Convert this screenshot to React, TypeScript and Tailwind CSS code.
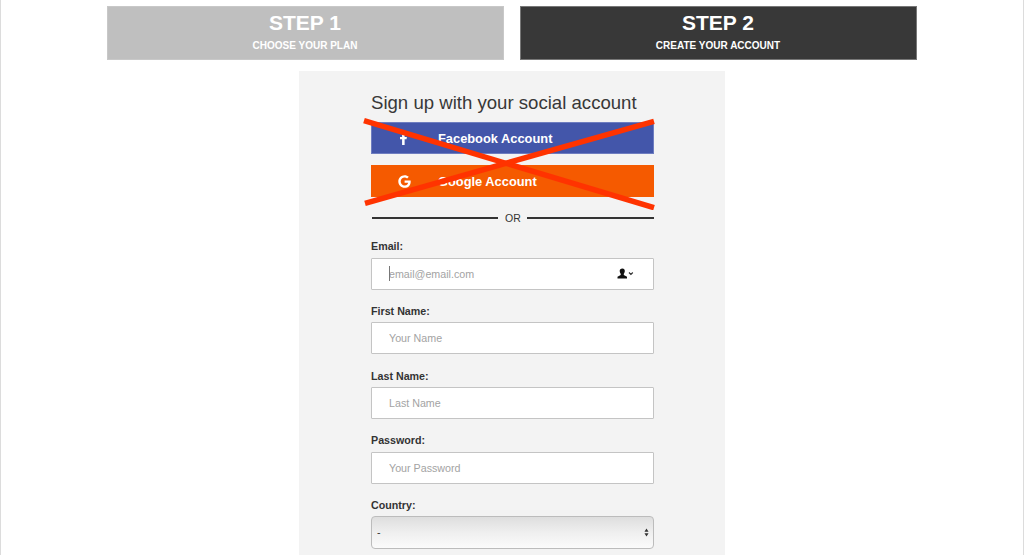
import { FaFacebookF, FaGoogle } from 'react-icons/fa';

const font = { fontFamily: '"Liberation Sans", Arial, sans-serif' };

// ── Small pieces ─────────────────────────────────────────
const StepBox = ({ title, sub, active }: { title: string; sub: string; active?: boolean }) => (
  <div className={`w-[397px] h-[54px] flex flex-col items-center border ${active ? 'bg-[#383838] border-[#777]' : 'bg-[#bfbfbf] border-[#c8c8c8]'}`}>
    <div className="mt-[4px] pr-[1px] text-[21px] leading-[24px] font-bold text-white">{title}</div>
    <div className="mt-[5px] pr-[1px] text-[10px] leading-[12px] font-bold text-white">{sub}</div>
  </div>
);

const Field = ({ label, placeholder, gap, inner, caret, icon }: { label: string; placeholder: string; gap: string; inner: string; caret?: boolean; icon?: boolean }) => (
  <div className={gap}>
    <div className="text-[10.7px] leading-[15px] font-bold text-[#333]">{label}</div>
    <div className={`relative ${inner}`}>
      <input
        readOnly
        placeholder={placeholder}
        className="w-[283px] h-[32px] block bg-white border border-[#c4c4c4] rounded-[1px] pl-[17px] text-[10.7px] text-[#333] placeholder:text-[#a3a3a3] outline-none"
        style={font}
      />
      {caret && <span className="absolute left-[18px] top-[8px] w-px h-[15px] bg-[#777]" />}
      {icon && (
        <svg className="absolute left-[246px] top-[10px]" width="17" height="11" viewBox="0 0 17 11">
          <path d="M5.500 0.500c1.500 0 2.300 1 2.300 2.500 0 1.200-.5 2.100-1 2.800v1.300l3.200 1.700v1.700H.5V8.800l3.200-1.700V5.800c-.5-.7-1-1.600-1-2.800 0-1.500.8-2.500 2.800-2.500z" fill="#111" />
          <path d="M12 4.500l1.900 1.900 1.900-1.900" fill="none" stroke="#333" strokeWidth="1.200" />
        </svg>
      )}
    </div>
  </div>
);

export default function App() {
  return (
    <div className="w-[1024px] h-[555px] overflow-hidden bg-white border-x border-[#dcdcdc]" style={font}>
      <div className="flex justify-center gap-[16px] pt-[6px]">
        <StepBox title="STEP 1" sub="CHOOSE YOUR PLAN" />
        <StepBox title="STEP 2" sub="CREATE YOUR ACCOUNT" active />
      </div>

      <div className="w-[426px] h-[484px] ml-[298px] mt-[11px] bg-[#f3f3f3] pl-[72px] pt-[21px]">
        <div className="w-[283px]">
          <h2 className="text-[18.6px] leading-[22px] text-[#383838] whitespace-nowrap">Sign up with your social account</h2>

          {/* Social buttons, struck through */}
          <div className="relative mt-[8px]">
            <div className="h-[32px] pt-[1px] flex items-center bg-[#4356aa] border border-[#6e7dc0] text-white">
              <FaFacebookF className="ml-[25px] w-[13px] h-[13px]" />
              <span className="ml-[28px] text-[12.85px] font-bold">Facebook Account</span>
            </div>
            <div className="h-[32px] pt-[1px] mt-[11px] flex items-center bg-[#f55a00] text-white">
              <FaGoogle className="ml-[27px] w-[13px] h-[13px]" />
              <span className="ml-[27px] text-[12.85px] font-bold">Google Account</span>
            </div>
            <svg className="absolute left-[-9px] top-[-4px]" width="296" height="92" viewBox="0 0 296 92">
              <path d="M2 2.700L292 89.700" stroke="#ff3300" strokeWidth="5.500" />
              <path d="M3 85.300L292 3.300" stroke="#ff3300" strokeWidth="5.500" />
            </svg>
          </div>

          <div className="mt-[15px] flex items-center text-[10.5px] leading-[12px] text-[#333]">
            <span className="ml-[1px] w-[126px] h-[2px] bg-[#333]" />
            <span className="ml-[7px] mr-[6px]">OR</span>
            <span className="w-[127px] h-[2px] bg-[#333]" />
          </div>

          <Field label="Email:" placeholder="email@email.com" gap="mt-[15px]" inner="mt-[4px]" caret icon />
          <Field label="First Name:" placeholder="Your Name" gap="mt-[14px]" inner="mt-[3px]" />
          <Field label="Last Name:" placeholder="Last Name" gap="mt-[15px]" inner="mt-[3px]" />
          <Field label="Password:" placeholder="Your Password" gap="mt-[14px]" inner="mt-[4px]" />

          <div className="mt-[14px]">
            <div className="text-[10.7px] leading-[15px] font-bold text-[#333]">Country:</div>
            <div className="relative mt-[3px]">
              <select
                className="appearance-none block w-[283px] h-[33px] rounded-[4px] border border-[#bcbcbc] bg-gradient-to-b from-[#dedede] via-[#efefef] to-[#fbfbfb] pl-[5px] text-[10.7px] text-[#333] outline-none"
                style={font}
              >
                <option>-</option>
              </select>
              <svg className="absolute right-[5px] top-[12px]" width="5" height="9" viewBox="0 0 6 11">
                <path d="M3 0.500L5.500 4.500H.5zM3 10.500L.5 6.500h5z" fill="#333" />
              </svg>
            </div>
          </div>
        </div>
      </div>
    </div>
  );
}
